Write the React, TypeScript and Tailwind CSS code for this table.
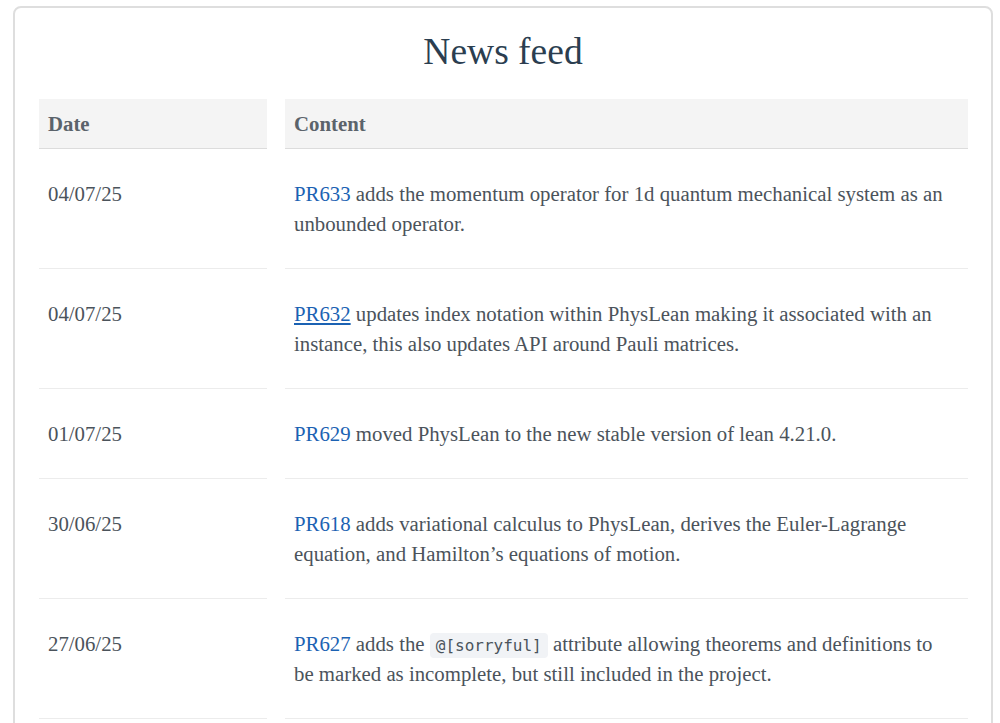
const news = [
  {
    date: "04/07/25",
    pr: "PR633",
    hover: false,
    body: <> adds the momentum operator for 1d quantum mechanical system as an unbounded operator.</>,
  },
  {
    date: "04/07/25",
    pr: "PR632",
    hover: true,
    body: <> updates index notation within PhysLean making it associated with an instance, this also updates API around Pauli matrices.</>,
  },
  {
    date: "01/07/25",
    pr: "PR629",
    hover: false,
    body: <> moved PhysLean to the new stable version of lean 4.21.0.</>,
  },
  {
    date: "30/06/25",
    pr: "PR618",
    hover: false,
    body: <> adds variational calculus to PhysLean, derives the Euler-Lagrange equation, and Hamilton’s equations of motion.</>,
  },
  {
    date: "27/06/25",
    pr: "PR627",
    hover: false,
    body: (
      <>
        {" "}adds the{" "}
        <code className="rounded-[4px] bg-[#f1f3f6] px-[6px] py-[3px] font-[family-name:'DejaVu_Sans_Mono',monospace] text-[16px] leading-none text-[#4a535c]">
          @[sorryful]
        </code>{" "}
        attribute allowing theorems and definitions to be marked as incomplete, but still included in the project.
      </>
    ),
  },
];

export default function App() {
  return (
    <div className="min-h-[723px] bg-white pl-[13px] pr-[7px] pt-[6px] font-[family-name:'Liberation_Serif',serif]">
      <div className="rounded-lg border-2 border-[#dedede] px-[24px] pb-10 pt-[22px]">
        <h1 className="mb-[26px] text-center text-[37.5px] leading-[43px] text-[#2b3e50]">News feed</h1>
        <div className="grid grid-cols-[228px_683px] gap-x-[18px] text-[20.8px] leading-[30px] text-[#4b535b]">
          <div className="border-b border-[#dcdcdc] bg-[#f4f4f4] pb-[9px] pl-[9px] pt-[10px] font-bold text-[#5b636b]">
            Date
          </div>
          <div className="border-b border-[#dcdcdc] bg-[#f4f4f4] pb-[9px] pl-[9px] pt-[10px] font-bold text-[#5b636b]">
            Content
          </div>
          {news.map((n, i) => (
            <div key={i} className="contents">
              <div className="border-b border-[#ececec] pb-[29px] pl-[9px] pt-[30px]">{n.date}</div>
              <div className="border-b border-[#ececec] pb-[29px] pl-[9px] pr-[16px] pt-[30px]">
                <a href="#" className={n.hover ? "text-[#1b62b3] underline" : "text-[#1b62b3]"}>
                  {n.pr}
                </a>
                {n.body}
              </div>
            </div>
          ))}
        </div>
      </div>
    </div>
  );
}
